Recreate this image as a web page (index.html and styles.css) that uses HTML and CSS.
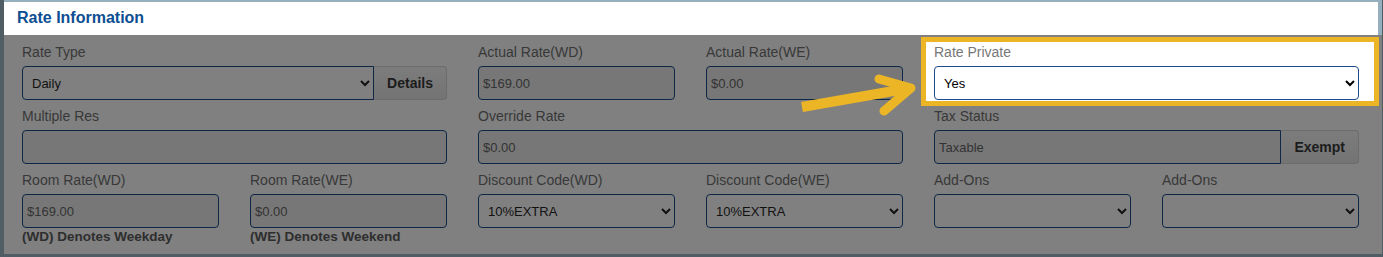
FILE: index.html
```html
<!DOCTYPE html>
<html lang="en">
<head>
  <meta charset="UTF-8" />
  <meta name="viewport" content="width=device-width, initial-scale=1.0" />
  <title>Rate Information</title>
  <link rel="stylesheet" href="styles.css">
</head>
<body>
  <div class="panel">
    <div class="panel-header">
      <h2>Rate Information</h2>
    </div>

    <div class="panel-body">
      <div class="field span-2">
        <label>Rate Type</label>
        <div class="group">
          <select class="control">
            <option>Daily</option>
          </select>
          <button class="btn">Details</button>
        </div>
      </div>

      <div class="field">
        <label>Actual Rate(WD)</label>
        <input class="control" type="text" value="$169.00" readonly />
      </div>

      <div class="field">
        <label>Actual Rate(WE)</label>
        <input class="control" type="text" value="$0.00" readonly />
      </div>

      <div class="field span-2 highlight">
        <label>Rate Private</label>
        <select class="control">
          <option>Yes</option>
        </select>
      </div>

      <div class="field span-2">
        <label>Multiple Res</label>
        <input class="control" type="text" value="" readonly />
      </div>

      <div class="field span-2">
        <label>Override Rate</label>
        <input class="control" type="text" value="$0.00" readonly />
      </div>

      <div class="field span-2">
        <label>Tax Status</label>
        <div class="group">
          <input class="control" type="text" value="Taxable" readonly />
          <button class="btn">Exempt</button>
        </div>
      </div>

      <div class="field">
        <label>Room Rate(WD)</label>
        <input class="control" type="text" value="$169.00" readonly />
        <p class="note">(WD) Denotes Weekday</p>
      </div>

      <div class="field">
        <label>Room Rate(WE)</label>
        <input class="control" type="text" value="$0.00" readonly />
        <p class="note">(WE) Denotes Weekend</p>
      </div>

      <div class="field">
        <label>Discount Code(WD)</label>
        <select class="control">
          <option>10%EXTRA</option>
        </select>
      </div>

      <div class="field">
        <label>Discount Code(WE)</label>
        <select class="control">
          <option>10%EXTRA</option>
        </select>
      </div>

      <div class="field">
        <label>Add-Ons</label>
        <select class="control">
          <option></option>
        </select>
      </div>

      <div class="field">
        <label>Add-Ons</label>
        <select class="control">
          <option></option>
        </select>
      </div>
    </div>
  </div>

  <!-- callout arrow pointing at the highlighted field -->
  <svg class="callout" viewBox="0 0 1383 257" width="1383" height="257">
    <line x1="802" y1="107" x2="905" y2="89" stroke="#ebb526" stroke-width="10" />
    <polyline points="879,79 911,88 884,111" fill="none" stroke="#ebb526" stroke-width="9" stroke-linecap="round" stroke-linejoin="round" />
  </svg>
</body>
</html>
```

FILE: styles.css
```css
body {
  font-family: "Liberation Sans", Arial, Helvetica, sans-serif;
  background-color: #515d65;
  margin: 0;
  padding: 0;
  position: relative;
  height: 257px;
  overflow: hidden;
}

.panel {
  margin: 0 1px 0 4px;
  border-top: 2px solid #96afbe;
  background-color: #808080;
}

.panel-header {
  height: 33px;
  background-color: #fff;
  border-right: 4px solid #96afbe;
  padding-left: 13px;
  display: flex;
  align-items: center;
}

.panel-header h2 {
  margin: 0 0 2px;
  font-size: 16px;
  font-weight: bold;
  color: #0d4e92;
}

.panel-body {
  display: grid;
  grid-template-columns: repeat(6, 197px);
  column-gap: 31px;
  row-gap: 8px;
  padding: 9px 0 9px 18px;
  align-items: start;
}

.field {
  display: flex;
  flex-direction: column;
}

.span-2 {
  grid-column: span 2;
}

.field label {
  font-size: 14px;
  line-height: 16px;
  color: #383838;
  margin-bottom: 6px;
}

.group {
  display: flex;
}

.group .control {
  flex: 1;
  min-width: 0;
  border-top-right-radius: 0;
  border-bottom-right-radius: 0;
}

.control {
  box-sizing: border-box;
  width: 100%;
  height: 34px;
  margin: 0;
  border: 1px solid #0e2746;
  border-radius: 4px;
  font-family: inherit;
  font-size: 13px;
  outline: none;
}

input.control {
  background-color: #777;
  color: #333;
  padding: 0 4px;
}

select.control {
  background-color: #808080;
  color: #111;
  padding: 0 5px;
}

.btn {
  box-sizing: border-box;
  height: 34px;
  padding: 0 13px;
  background: linear-gradient(#7c7c7c, #747474);
  border: 1px solid #6c6c6c;
  border-left: none;
  border-radius: 0 4px 4px 0;
  font-family: inherit;
  font-size: 14px;
  font-weight: bold;
  color: #1c1c1c;
}

.note {
  margin: 1px 0 0;
  font-size: 13.5px;
  line-height: 16px;
  font-weight: bold;
  color: #2e2e2e;
}

.highlight {
  margin: -7px -20px -6px -13px;
  padding: 2px 15px 1px 8px;
  border: 5px solid #ebb526;
  background-color: #fff;
}

.highlight label {
  color: #777;
}

.highlight select.control {
  background-color: #fff;
  border-color: #1a4b8c;
  color: #000;
}

.callout {
  position: absolute;
  left: 0;
  top: 0;
  pointer-events: none;
}
```
